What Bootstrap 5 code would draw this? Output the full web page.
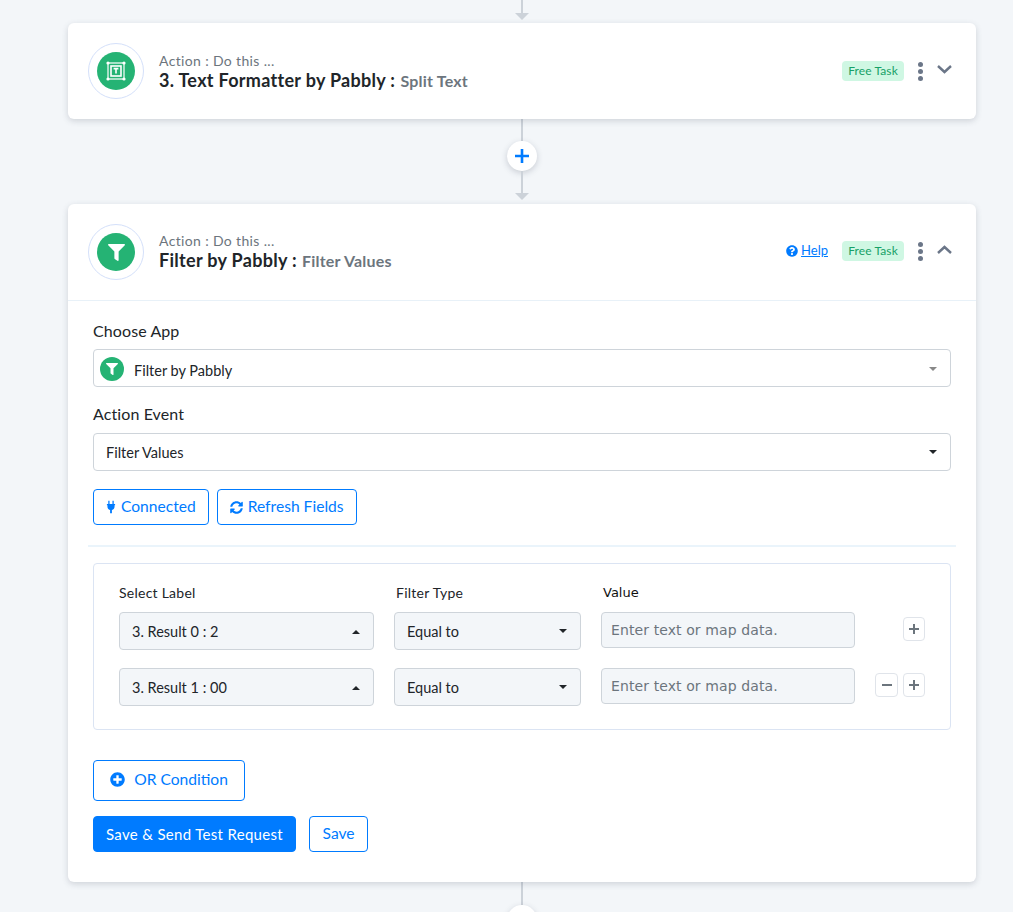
<!DOCTYPE html>
<html lang="en">
<head>
    <meta charset="UTF-8">
    <meta name="viewport" content="width=device-width, initial-scale=1.0">
    <title>Filter by Pabbly</title>
    <link rel="stylesheet" href="https://cdn.jsdelivr.net/npm/bootstrap@5.3.0/dist/css/bootstrap.min.css">
    <style>
        html, body { height: 912px; overflow: hidden; }
        body { background: #f3f6f9; font-family: Lato, "Open Sans", sans-serif; color: #212529; }
        .flow-wrap { width: 908px; margin-left: 68px; }

        /* connectors between steps */
        .link-col { display: flex; flex-direction: column; align-items: center; }
        .link-line { width: 2px; background: #ccd2d9; }
        .link-arrow { width: 0; height: 0; border-left: 7px solid transparent; border-right: 7px solid transparent; border-top: 7px solid #ccd2d9; }
        .link-top { height: 23px; }
        .link-top .link-line { height: 13px; }
        .link-mid { height: 85px; }
        .link-stub { height: 22px; }
        .link-add { width: 30px; height: 30px; border-radius: 50%; background: #fff; box-shadow: 0 2px 6px rgba(50, 60, 80, .22); display: flex; align-items: center; justify-content: center; }
        .link-end .link-line { height: 23px; }

        .step-card { border: 0; border-radius: 6px; box-shadow: 0 2px 6px rgba(60, 70, 90, .2); }
        .step-head { height: 96px; padding: 0 24px 0 20px; display: flex; align-items: center; }
        .step-open .step-head { border-bottom: 1px solid #e8f1f8; height: 97px; }
        .step-open .head-text, .step-open .head-end { margin-bottom: 2px; }
        .logo-ring { width: 56px; height: 56px; border-radius: 50%; border: 1px solid #d4e0fa; display: flex; align-items: center; justify-content: center; margin-right: 15px; flex: none; }
        .logo-dot { width: 38px; height: 38px; border-radius: 50%; background: #25b374; display: flex; align-items: center; justify-content: center; }
        .step-kicker { font-size: 14px; line-height: 20px; color: #6c757d; letter-spacing: .35px; }
        .step-title { font-size: 18px; line-height: 20px; font-weight: 700; color: #212529; letter-spacing: .3px; margin-top: -1px; margin-bottom: 1px; }
        .step-sub { font-size: 16px; color: #6c757d; font-weight: 700; letter-spacing: .2px; margin-left: .5px; }
        .help-link { font-size: 13px; color: #007bff; margin-right: 14px; display: flex; align-items: center; gap: 3px; }
        .task-tag { background: #cff7e3; color: #16a067; font-size: 12px; font-weight: 400; padding: 0 6px; height: 20px; line-height: 20px; border-radius: 4px; width: 62px; text-align: center; letter-spacing: .1px; }
        .more-dots { margin: 0 14px; display: flex; flex-direction: column; gap: 2px; }
        .more-dots i { width: 5px; height: 5px; border-radius: 50%; background: #6b7688; display: block; }
        .head-end { margin-left: auto; display: flex; align-items: center; }
        .head-end svg.chev { margin-top: -4px; }

        .step-body { padding: 20px 25px 30px; }
        .field-label { font-size: 16px; line-height: 20px; color: #212529; margin-bottom: 8px; letter-spacing: .1px; }
        .event-label { margin-bottom: 9px; }
        .app-select, .form-select.plain-select { height: 38px; border-color: #ced4da; border-radius: 4px; font-size: 14.5px; color: #212529; font-family: Lato, sans-serif; padding: 1px 12px 0; }
        .app-select { padding-left: 6px; display: flex; align-items: center; gap: 10px; margin-bottom: 17px; }
        .app-select .logo-dot { width: 24px; height: 24px; }
        .app-name { margin-top: 4px; }
        .caret-right { margin-left: auto; margin-right: 1px; width: 0; height: 0; border-left: 4.500px solid transparent; border-right: 4.500px solid transparent; border-top: 4.500px solid #888; }
        .plain-select { --bs-form-select-bg-img: url("data:image/svg+xml,%3csvg xmlns='http://www.w3.org/2000/svg' viewBox='0 0 10 6'%3e%3cpath fill='%23212529' d='M0 0h10L5 5z'/%3e%3c/svg%3e"); background-size: 8px 5px; background-position: right 13px center; }
        .caret-up { --bs-form-select-bg-img: url("data:image/svg+xml,%3csvg xmlns='http://www.w3.org/2000/svg' viewBox='0 0 10 6'%3e%3cpath fill='%23212529' d='M0 6h10L5 1z'/%3e%3c/svg%3e"); }
        .event-select { margin-bottom: 18px; }
        .btn-line { color: #007bff; border-color: #007bff; background: #fff; font-size: 15.6px; height: 36px; padding: 0 12px; border-radius: 4px; display: inline-flex; align-items: center; gap: 5px; }
        .btn-solid { color: #fff; background: #007bff; border-color: #007bff; font-size: 15px; height: 36px; padding: 0 12px; border-radius: 4px; display: inline-flex; align-items: center; letter-spacing: .32px; }
        .save-btn { width: 59px; justify-content: center; margin-left: 5px; }
        .split-rule { margin: 20px -5px 16px; height: 2px; background: #eaf4fb; }

        .cond-box { border: 1px solid #dbe4f3; border-radius: 4px; padding: 19px 25px 23px; height: 167px; }
        .cond-row { display: flex; gap: 20px; height: 38px; margin-bottom: 18px; }
        .cond-row:last-child { margin-bottom: 0; }
        .cond-head { display: flex; gap: 20px; height: 29px; font-size: 14px; line-height: 20px; color: #212529; letter-spacing: .25px; }
        .w-label { width: 255px; flex: none; }
        .w-type { width: 187px; flex: none; }
        .w-value { width: 254px; flex: none; }
        .cond-head .w-type, .cond-head .w-value { padding-left: 2px; }
        .cond-head .w-value { font-family: "DejaVu Sans", sans-serif; font-size: 13px; letter-spacing: 0; color: #111; }
        .cond-row .form-select { background-color: #f3f6f9; height: 38px; }
        .value-input { height: 36px; background: #f3f6f9; border-color: #ced4da; border-radius: 4px; font-family: "DejaVu Sans", sans-serif; font-size: 14px; padding: 0 9px; letter-spacing: .1px; }
        .value-input::placeholder { color: #6c757d; opacity: 1; }
        .cond-tools { flex: 1; display: flex; justify-content: flex-end; gap: 5px; padding-top: 5px; }
        .tool-btn { width: 22px; height: 24px; padding: 0; border: 1px solid #e0e4ea; border-radius: 4px; background: #fff; display: flex; align-items: center; justify-content: center; }
        .tool-wide { width: 23px; }
        .or-btn { height: 41px; margin: 30px 0 15px; width: 152px; justify-content: center; gap: 9px; display: flex; padding-bottom: 2px; }
    </style>
</head>
<body>
    <div class="flow-wrap">
        <div class="link-col link-top">
            <div class="link-line"></div>
            <div class="link-arrow"></div>
        </div>

        <!-- step 3 -->
        <div class="card step-card">
            <div class="step-head">
                <div class="logo-ring">
                    <div class="logo-dot">
                        <svg width="22" height="22" viewBox="0 0 22 22" fill="none" stroke="#fff">
                            <rect x="3" y="3" width="16" height="16" stroke-width="1.2"/>
                            <rect x="6" y="6" width="10" height="10" stroke-width="1.6"/>
                            <path d="M8.600 8.600h4.800M11 8.600v5" stroke-width="1.6"/>
                            <g fill="#fff" stroke="none"><circle cx="3" cy="3" r="1.6"/><circle cx="19" cy="3" r="1.6"/><circle cx="3" cy="19" r="1.6"/><circle cx="19" cy="19" r="1.6"/></g>
                        </svg>
                    </div>
                </div>
                <div class="head-text">
                    <div class="step-kicker">Action : Do this ...</div>
                    <div class="step-title">3. Text Formatter by Pabbly : <span class="step-sub">Split Text</span></div>
                </div>
                <div class="head-end">
                    <span class="task-tag">Free Task</span>
                    <span class="more-dots"><i></i><i></i><i></i></span>
                    <svg class="chev" width="15" height="9" viewBox="0 0 15 9" fill="none" stroke="#6b7688" stroke-width="2.4"><path d="M1 1l6.500 6L14 1"/></svg>
                </div>
            </div>
        </div>

        <div class="link-col link-mid">
            <div class="link-line link-stub"></div>
            <div class="link-add">
                <svg width="14" height="14" viewBox="0 0 14 14" fill="#007bff"><path d="M5.700 0h2.600v5.700H14v2.600H8.300V14H5.700V8.300H0V5.700h5.700z"/></svg>
            </div>
            <div class="link-line link-stub"></div>
            <div class="link-arrow"></div>
        </div>

        <!-- filter step -->
        <div class="card step-card step-open">
            <div class="step-head">
                <div class="logo-ring">
                    <div class="logo-dot">
                        <svg width="17" height="17" viewBox="0 0 512 512" fill="#fff"><path d="M487.976 0H24.028C2.71 0-8.047 25.866 7.058 40.971L192 225.941V432c0 7.831 3.821 15.17 10.237 19.662l80 55.98C298.02 518.69 320 507.493 320 487.98V225.941l184.947-184.97C520.021 25.896 509.338 0 487.976 0z"/></svg>
                    </div>
                </div>
                <div class="head-text">
                    <div class="step-kicker">Action : Do this ...</div>
                    <div class="step-title">Filter by Pabbly : <span class="step-sub">Filter Values</span></div>
                </div>
                <div class="head-end">
                    <a href="#" class="help-link">
                        <svg width="12" height="12" viewBox="0 0 512 512" fill="#007bff"><path d="M504 256c0 136.997-111.043 248-248 248S8 392.997 8 256C8 119.083 119.043 8 256 8s248 111.083 248 248zM262.655 90c-54.497 0-89.255 22.957-116.549 63.758-3.536 5.286-2.353 12.415 2.715 16.258l34.699 26.31c5.205 3.947 12.621 3.008 16.665-2.122 17.864-22.658 30.113-35.797 57.303-35.797 20.429 0 45.698 13.148 45.698 32.958 0 14.976-12.363 22.667-32.534 33.976C247.128 238.528 216 254.941 216 296v4c0 6.627 5.373 12 12 12h56c6.627 0 12-5.373 12-12v-1.333c0-28.462 83.186-29.647 83.186-106.667 0-58.002-60.165-102-116.531-102zM256 338c-25.365 0-46 20.635-46 46 0 25.364 20.635 46 46 46s46-20.636 46-46c0-25.365-20.635-46-46-46z"/></svg>
                        <span>Help</span>
                    </a>
                    <span class="task-tag">Free Task</span>
                    <span class="more-dots"><i></i><i></i><i></i></span>
                    <svg class="chev" width="15" height="9" viewBox="0 0 15 9" fill="none" stroke="#6b7688" stroke-width="2.4"><path d="M1 8l6.500-6L14 8"/></svg>
                </div>
            </div>

            <div class="step-body">
                <div class="field-label">Choose App</div>
                <div class="form-control app-select">
                    <div class="logo-dot">
                        <svg width="12" height="12" viewBox="0 0 512 512" fill="#fff"><path d="M487.976 0H24.028C2.71 0-8.047 25.866 7.058 40.971L192 225.941V432c0 7.831 3.821 15.17 10.237 19.662l80 55.98C298.02 518.69 320 507.493 320 487.98V225.941l184.947-184.97C520.021 25.896 509.338 0 487.976 0z"/></svg>
                    </div>
                    <span class="app-name">Filter by Pabbly</span>
                    <span class="caret-right"></span>
                </div>

                <div class="field-label event-label">Action Event</div>
                <select class="form-select plain-select event-select">
                    <option>Filter Values</option>
                </select>

                <div class="d-flex gap-2">
                    <button class="btn btn-line">
                        <svg width="10" height="14" viewBox="0 0 11 14" fill="#007bff"><path d="M2.500 0h1.400v3.600h3.200V0h1.400v3.600H10v1.600H9.400v1.600c0 1.800-1.200 3.200-2.900 3.600V14H4.500V10.400C2.800 10 1.600 8.600 1.600 6.800V5.200H1V3.600h1.500z"/></svg>
                        Connected
                    </button>
                    <button class="btn btn-line">
                        <svg width="13" height="13" viewBox="0 0 512 512" fill="#007bff"><path d="M370.72 133.28C339.458 104.008 298.888 87.962 255.848 88c-77.458.068-144.328 53.178-162.791 126.85-1.344 5.363-6.122 9.15-11.651 9.15H24.103c-7.498 0-13.194-6.807-11.807-14.176C33.933 94.924 134.813 8 256 8c66.448 0 126.791 26.136 171.315 68.685L463.03 40.97C478.149 25.851 504 36.559 504 57.941V192c0 13.255-10.745 24-24 24H345.941c-21.382 0-32.09-25.851-16.971-40.971l41.75-41.749zM32 296h134.059c21.382 0 32.09 25.851 16.971 40.971l-41.75 41.75c31.262 29.273 71.835 45.319 114.876 45.28 77.418-.07 144.315-53.144 162.787-126.849 1.344-5.363 6.122-9.15 11.651-9.15h57.304c7.498 0 13.194 6.807 11.807 14.176C478.067 417.076 377.187 504 256 504c-66.448 0-126.791-26.136-171.315-68.685L48.97 471.03C33.851 486.149 8 475.441 8 454.059V320c0-13.255 10.745-24 24-24z"/></svg>
                        Refresh Fields
                    </button>
                </div>

                <div class="split-rule"></div>

                <div class="cond-box">
                    <div class="cond-head">
                        <div class="w-label">Select Label</div>
                        <div class="w-type">Filter Type</div>
                        <div class="w-value">Value</div>
                    </div>
                    <div class="cond-row">
                        <select class="form-select plain-select caret-up w-label"><option>3. Result 0 : 2</option></select>
                        <select class="form-select plain-select w-type"><option>Equal to</option></select>
                        <input type="text" class="form-control value-input w-value" placeholder="Enter text or map data.">
                        <div class="cond-tools">
                            <button class="tool-btn"><svg width="10" height="10" viewBox="0 0 10 10" fill="#6c757d"><path d="M4 0h2v4h4v2H6v4H4V6H0V4h4z"/></svg></button>
                        </div>
                    </div>
                    <div class="cond-row">
                        <select class="form-select plain-select caret-up w-label"><option>3. Result 1 : 00</option></select>
                        <select class="form-select plain-select w-type"><option>Equal to</option></select>
                        <input type="text" class="form-control value-input w-value" placeholder="Enter text or map data.">
                        <div class="cond-tools">
                            <button class="tool-btn tool-wide"><svg width="10" height="10" viewBox="0 0 10 10" fill="#6c757d"><path d="M0 4h10v2H0z"/></svg></button>
                            <button class="tool-btn"><svg width="10" height="10" viewBox="0 0 10 10" fill="#6c757d"><path d="M4 0h2v4h4v2H6v4H4V6H0V4h4z"/></svg></button>
                        </div>
                    </div>
                </div>

                <button class="btn btn-line or-btn">
                    <svg width="15" height="15" viewBox="0 0 512 512" fill="#007bff"><path d="M256 8C119 8 8 119 8 256s111 248 248 248 248-111 248-248S393 8 256 8zm144 276c0 6.600-5.400 12-12 12h-92v92c0 6.600-5.400 12-12 12h-56c-6.600 0-12-5.400-12-12v-92h-92c-6.600 0-12-5.400-12-12v-56c0-6.600 5.400-12 12-12h92v-92c0-6.600 5.400-12 12-12h56c6.600 0 12 5.400 12 12v92h92c6.600 0 12 5.400 12 12v56z"/></svg>
                    OR Condition
                </button>

                <div class="d-flex gap-2">
                    <button class="btn btn-solid">Save &amp; Send Test Request</button>
                    <button class="btn btn-line save-btn">Save</button>
                </div>
            </div>
        </div>

        <div class="link-col link-end">
            <div class="link-line"></div>
            <div class="link-add"></div>
        </div>
    </div>

    <script src="https://cdn.jsdelivr.net/npm/bootstrap@5.3.0/dist/js/bootstrap.bundle.min.js"></script>
</body>
</html>
